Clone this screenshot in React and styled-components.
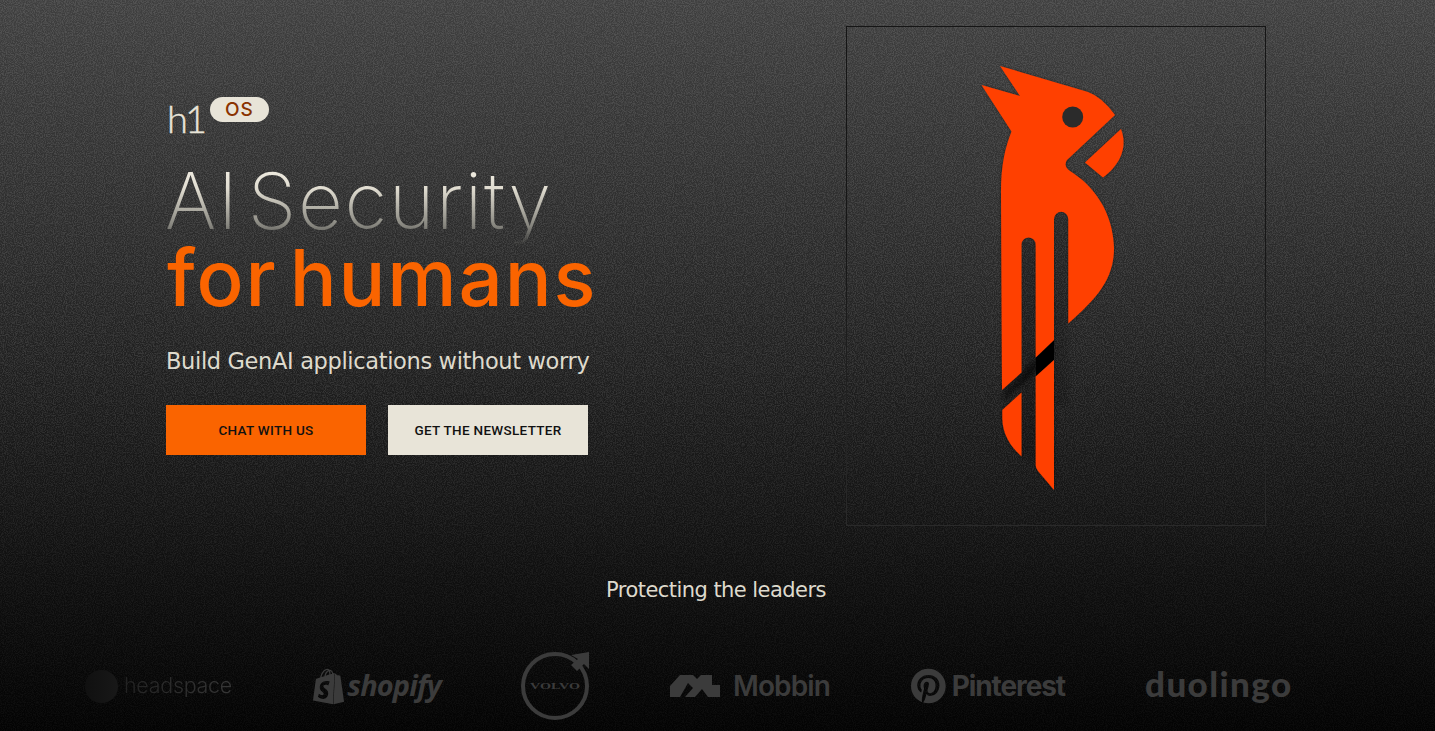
import React from "react";
import styled, { createGlobalStyle } from "styled-components";
import { SiShopify } from "react-icons/si";
import { FaPinterest } from "react-icons/fa";

const Global = createGlobalStyle`
  html, body { margin: 0; padding: 0; background: #0a0a0a; }
  * { box-sizing: border-box; }
`;

const Page = styled.main`
  position: relative;
  width: 1435px;
  height: 731px;
  overflow: hidden;
  background: linear-gradient(180deg, #3f3f3f 0%, #2d2d2d 30%, #1c1c1c 55%, #141414 70%, #0d0d0d 82%, #030303 100%);
  font-family: "Inter", "Liberation Sans", sans-serif;
  color: #e8e4d8;
`;

const Grain = styled.svg`
  position: absolute;
  inset: 0;
  width: 100%;
  height: 100%;
  opacity: 0.11;
  pointer-events: none;
  -webkit-mask-image: linear-gradient(180deg, #000 0%, #000 50%, rgba(0, 0, 0, 0.5) 80%, rgba(0, 0, 0, 0.3) 100%);
  mask-image: linear-gradient(180deg, #000 0%, #000 50%, rgba(0, 0, 0, 0.5) 80%, rgba(0, 0, 0, 0.3) 100%);
`;

const Content = styled.div`
  position: relative;
  display: flex;
  flex-direction: column;
  height: 100%;
`;

const Hero = styled.section`
  display: flex;
  justify-content: space-between;
  padding: 26px 169px 0 166px;
`;

const Intro = styled.div`
  display: flex;
  flex-direction: column;
  align-items: flex-start;
  padding-top: 71px;
`;

const Brand = styled.div`
  display: flex;
  align-items: flex-start;
  height: 38px;
  margin-left: 1px;
`;

const BrandName = styled.span`
  font-family: "Lato", sans-serif;
  font-weight: 300;
  font-size: 38px;
  line-height: 38px;
  margin-top: 2px;
  letter-spacing: -3px;
  -webkit-text-stroke: 0.4px #e8e4d8;
`;

const Badge = styled.span`
  display: flex;
  align-items: center;
  justify-content: center;
  width: 59px;
  height: 25px;
  margin-left: 6px;
  border-radius: 13px;
  background: #e8e4d8;
  color: #8a3300;
  font-size: 19px;
  font-weight: 500;
  letter-spacing: 1px;
`;

const Title = styled.h1`
  margin: 27px 0 0;
  font-size: 78px;
  line-height: 77px;
  font-weight: inherit;
`;

const TitleLight = styled.span`
  display: block;
  font-weight: 250;
  margin-left: -1px;
  padding-bottom: 12px;
  margin-bottom: -12px;
  letter-spacing: 1.6px;
  word-spacing: -15px;
  background: linear-gradient(180deg, #eeeadf 10%, #e0dcd0 30%, #85847d 72%, rgba(100, 100, 96, 0.1) 92%);
  -webkit-background-clip: text;
  background-clip: text;
  color: transparent;
`;

const TitleStrong = styled.span`
  position: relative;
  display: block;
  font-weight: 500;
  margin-left: 1px;
  letter-spacing: 1.9px;
  word-spacing: -10.5px;
  color: #fa6400;
`;

const Lead = styled.p`
  margin: 30px 0 0;
  font-family: "DejaVu Sans", sans-serif;
  font-size: 22.5px;
  line-height: 30px;
  font-weight: 400;
  letter-spacing: -0.35px;
  color: #dedacd;
`;

const Actions = styled.div`
  display: flex;
  gap: 22px;
  margin-top: 29px;
`;

const Action = styled.a`
  display: flex;
  align-items: center;
  justify-content: center;
  width: 200px;
  height: 50px;
  background: ${(p) => (p.$primary ? "#fa6400" : "#e8e4d8")};
  color: #111;
  font-family: "Roboto", sans-serif;
  font-size: 13.5px;
  font-weight: 500;
  letter-spacing: 0.3px;
`;

const Frame = styled.div`
  width: 420px;
  height: 500px;
  border: 1px solid;
  border-image: linear-gradient(180deg, #151515 0%, #171717 45%, #2a2a2a 100%) 1;
`;

const Parrot = styled.svg`
  display: block;
  width: 420px;
  height: 500px;
  margin: -1px;
`;

const Leaders = styled.h2`
  margin: 50px 0 0;
  text-align: center;
  padding-right: 3px;
  font-family: "DejaVu Sans", sans-serif;
  font-weight: 400;
  font-size: 21px;
  line-height: 28px;
  letter-spacing: -0.55px;
  color: #dedacd;
`;

const LogoRow = styled.div`
  display: flex;
  align-items: center;
  gap: 80px;
  height: 70px;
  margin-top: 47px;
  padding-left: 85px;
  color: #3b3b3b;
`;

const Logo = styled.div`
  display: flex;
  align-items: center;
  flex: none;
  gap: ${(p) => p.$gap || 0}px;
  width: ${(p) => p.$w}px;
`;

const LogoWord = styled.span`
  font-family: ${(p) => p.$font || '"Inter", sans-serif'};
  font-size: ${(p) => p.$size}px;
  font-weight: ${(p) => p.$weight || 600};
  font-style: ${(p) => (p.$italic ? "italic" : "normal")};
  letter-spacing: ${(p) => p.$track || 0}px;
  padding-bottom: ${(p) => p.$lift || 0}px;
  line-height: 1;
  white-space: nowrap;
`;

const FadedWord = styled(LogoWord)`
  background: linear-gradient(90deg, #222 0%, #2c2c2c 50%, #363636 100%);
  -webkit-background-clip: text;
  background-clip: text;
  color: transparent;
`;

const HeadDot = styled.span`
  width: 33px;
  height: 33px;
  border-radius: 50%;
  background: linear-gradient(90deg, #101010, #181818);
  flex: none;
`;

const VolvoMark = styled.svg`
  width: 68px;
  height: 70px;
  flex: none;
`;

const VolvoLabel = styled.text`
  font-family: "Liberation Serif", serif;
  font-weight: 700;
  font-size: 9px;
  fill: #3b3b3b;
`;

export default function App() {
  return (
    <>
      <Global />
      <Page>
        <Grain aria-hidden="true">
          <filter id="grain" x="0" y="0" width="100%" height="100%">
            <feTurbulence type="fractalNoise" baseFrequency="0.9" numOctaves="2" seed="4" />
            <feColorMatrix type="matrix" values="0 0 0 0 1  0 0 0 0 1  0 0 0 0 1  3.2 0 0 0 -1.2" />
          </filter>
          <rect width="100%" height="100%" filter="url(#grain)" />
        </Grain>
        <Content>
          <Hero>
            <Intro>
              <Brand>
                <BrandName>h1</BrandName>
                <Badge>OS</Badge>
              </Brand>
              <Title>
                <TitleLight>AI Security</TitleLight>
                <TitleStrong>for humans</TitleStrong>
              </Title>
              <Lead>Build GenAI applications without worry</Lead>
              <Actions>
                <Action $primary>CHAT WITH US</Action>
                <Action>GET THE NEWSLETTER</Action>
              </Actions>
            </Intro>
            <Frame>
              <Parrot viewBox="846 26 420 500" aria-label="h1 parrot logo">
                <defs>
                  <filter id="soft" x="-40%" y="-40%" width="180%" height="180%">
                    <feGaussianBlur stdDeviation="2.5" />
                  </filter>
                  <filter id="edge" x="-10%" y="-10%" width="120%" height="120%">
                    <feDropShadow dx="0" dy="0" stdDeviation="1.4" floodColor="#000" floodOpacity="0.5" />
                  </filter>
                </defs>
                <rect x="1021" y="240" width="15" height="220" fill="#000" opacity="0.18" filter="url(#soft)" />
                <rect x="1054" y="215" width="14" height="190" fill="#000" opacity="0.14" filter="url(#soft)" />
                <polygon points="1004,402 1021,386 1036,372 1054,356 1054,342 1036,358 1021,374 1004,392" fill="#000" filter="url(#soft)" opacity="0.55" />
                <polygon points="1036,357.5 1054,340 1054,360 1036,376.5" fill="#000" />
                <g fill="#ff4000" filter="url(#edge)">
                  <path d="M1000 66 L1088 92 Q1102 97 1115 115 L1067 160 Q1063 166 1070 171 C1094 186 1113 212 1114 248 C1114 280 1096 299 1068.3 323.5 L1068.3 219 A7 7 0 0 0 1054 219 L1054 340 L1035.7 357.5 L1035.7 244.5 A7 7 0 0 0 1021.5 244.5 L1021.5 372.5 L1002 390 L1001 193 C1001 165 1005 148 1011.5 131.5 L981.5 85 L1020 96 Z" />
                  <path d="M1121 129 L1085 162.5 L1103 177.5 C1117 167 1129 150 1121 129 Z" />
                  <path d="M1021.5 392.5 L1002.3 410 L1002.3 418 C1002.5 434 1010 446 1021.5 456.5 Z" />
                  <path d="M1054 360 L1035.7 376.5 L1035.7 465 Q1035.7 468 1038 471 L1054 490 Z" />
                </g>
                <circle cx="1072.7" cy="117" r="10.5" fill="#2b2b2b" />
              </Parrot>
            </Frame>
          </Hero>
          <Leaders>Protecting the leaders</Leaders>
          <LogoRow>
            <Logo $w={146} $gap={6}>
              <HeadDot />
              <FadedWord $size={21.5} $weight={300} $track={-0.3}>headspace</FadedWord>
            </Logo>
            <Logo $w={130} $gap={1}>
              <SiShopify size={37} />
              <LogoWord $font='"Open Sans", sans-serif' $size={29} $weight={700} $italic $track={-0.9} $lift={3}>shopify</LogoWord>
            </Logo>
            <Logo $w={68}>
              <VolvoMark viewBox="0 0 68 70">
                <circle cx="34" cy="35" r="32" fill="none" stroke="#3b3b3b" strokeWidth="4" />
                <polygon points="50,4 68,1 68,18 63,13 56,20 50,14 57,8" fill="#3b3b3b" />
                <VolvoLabel x="34" y="38" textAnchor="middle" textLength="50" lengthAdjust="spacingAndGlyphs">VOLVO</VolvoLabel>
              </VolvoMark>
            </Logo>
            <Logo $w={162} $gap={13}>
              <svg width="51" height="24" viewBox="0 0 51 24" fill="#3b3b3b" aria-hidden="true">
                <path d="M1 12 L11 1 L24 1 L28 5 L32 1 L43 1 L43 11 L51 11 L51 23 L39 23 L33 15 L26 23 L16 23 L24 14 L19 9 L11 23 L1 23 Z" />
              </svg>
              <LogoWord $size={28} $weight={600} $track={-0.9}>Mobbin</LogoWord>
            </Logo>
            <Logo $w={154} $gap={6}>
              <FaPinterest size={36} />
              <LogoWord $size={28} $weight={700} $track={-1.1}>Pinterest</LogoWord>
            </Logo>
            <Logo $w={146}>
              <LogoWord $font='"Lato", sans-serif' $size={35} $weight={900} $track={1.4} $lift={5}>duolingo</LogoWord>
            </Logo>
          </LogoRow>
        </Content>
      </Page>
    </>
  );
}
